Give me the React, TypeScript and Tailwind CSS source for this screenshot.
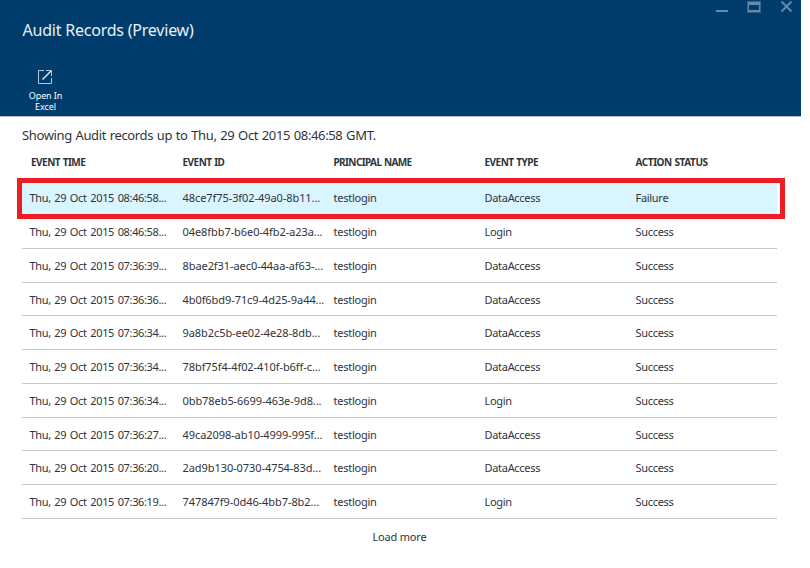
type RecordRow = {
  time: string;
  id: string;
  type: string;
  status: string;
  height: string;
};

const records: RecordRow[] = [
  { time: "08:46:58", id: "48ce7f75-3f02-49a0-8b11...", type: "DataAccess", status: "Failure", height: "h-[34px]" },
  { time: "08:46:58", id: "04e8fbb7-b6e0-4fb2-a23a...", type: "Login", status: "Success", height: "h-[34px]" },
  { time: "07:36:39", id: "8bae2f31-aec0-44aa-af63-...", type: "DataAccess", status: "Success", height: "h-[34px]" },
  { time: "07:36:36", id: "4b0f6bd9-71c9-4d25-9a44...", type: "DataAccess", status: "Success", height: "h-[33px]" },
  { time: "07:36:34", id: "9a8b2c5b-ee02-4e28-8db...", type: "DataAccess", status: "Success", height: "h-[34px]" },
  { time: "07:36:34", id: "78bf75f4-4f02-410f-b6ff-c...", type: "DataAccess", status: "Success", height: "h-[34px]" },
  { time: "07:36:34", id: "0bb78eb5-6699-463e-9d8...", type: "Login", status: "Success", height: "h-[34px]" },
  { time: "07:36:27", id: "49ca2098-ab10-4999-995f...", type: "DataAccess", status: "Success", height: "h-[33px]" },
  { time: "07:36:20", id: "2ad9b130-0730-4754-83d...", type: "DataAccess", status: "Success", height: "h-[34px]" },
  { time: "07:36:19", id: "747847f9-0d46-4bb7-8b2...", type: "Login", status: "Success", height: "h-[34px]" },
];

const columns = "grid grid-cols-[153px_151px_151px_151px_1fr] whitespace-nowrap";

function WindowControls() {
  return (
    <svg className="h-[14px] w-[78px]" viewBox="0 0 78 14" fill="none" shapeRendering="crispEdges">
      <rect x="0" y="10" width="12" height="2" fill="#6689a7" />
      <rect x="31" y="1" width="14" height="12" fill="#33638a" />
      <rect x="32" y="2" width="12" height="10" fill="#6689a7" />
      <rect x="33" y="5" width="10" height="5" fill="#003c6c" />
      <path d="M65.5 1.5 75.5 11.5M75.5 1.5 65.5 11.5" stroke="#6689a7" strokeWidth="1.9" shapeRendering="auto" />
    </svg>
  );
}

function OpenIcon() {
  return (
    <svg className="mr-px h-[14px] w-[14px]" viewBox="0 0 14 14" fill="none" stroke="#b5c6d5">
      <path d="M6 .5H.5V13.5H13.5V8" />
      <path d="M8 .5H13.5V6" />
      <path d="M4.5 9.5 13 1" strokeWidth="1.3" stroke="#f2f6f9" />
    </svg>
  );
}

export default function App() {
  return (
    <div className="h-[568px] w-[810px] overflow-hidden bg-white font-['Noto_Sans','Open_Sans',sans-serif] text-[#2f343b]">
      <header className="flex h-[117px] w-[801px] justify-between border-b border-[#b5bec7] bg-[#003c6c] text-white">
        <div className="pl-[22px] pt-[18px]">
          <h1 className="whitespace-nowrap pl-[0.5px] text-[16px] leading-6 font-normal tracking-[-0.22px] text-[#e9eff4]">
            Audit Records (Preview)
          </h1>
          <button className="mt-[28px] flex w-[47px] flex-col items-center whitespace-nowrap">
            <OpenIcon />
            <span className="mt-[6px] text-[9px] leading-[11px] tracking-[-0.1px]">
              Open In
              <br />
              Excel
            </span>
          </button>
        </div>
        <div className="mr-[7px]">
          <WindowControls />
        </div>
      </header>

      <main className="relative w-[777px] pl-[22px]">
        <p className="pt-[8px] text-[13px] leading-5 tracking-[-0.37px] [word-spacing:0.7px] whitespace-nowrap">
          Showing Audit records up to Thu, 29 Oct 2015 08:46:58 GMT.
        </p>
        <div className={`${columns} h-[36px] pt-[10px] pl-[7.5px] text-[10px] leading-[15px] font-bold tracking-[-0.5px] [word-spacing:0.5px]`}>
          <span className="pl-[1.5px]">EVENT TIME</span>
          <span>EVENT ID</span>
          <span className="tracking-[-0.6px]">PRINCIPAL NAME</span>
          <span>EVENT TYPE</span>
          <span className="tracking-[-0.42px]">ACTION STATUS</span>
        </div>
        {records.map((r, i) => (
          <div
            key={r.id}
            className={`${columns} ${r.height} border-b border-[#c8c8c8] pt-[9px] pl-[7.5px] text-[11px] leading-4 ${i === 0 ? "bg-[#d9f5ff]" : ""}`}
          >
            <span className="tracking-[-0.35px] [word-spacing:1.1px]">Thu, 29 Oct 2015 {r.time}...</span>
            <span className="tracking-[-0.07px]">{r.id}</span>
            <span className="tracking-[-0.25px]">testlogin</span>
            <span className="tracking-[-0.3px]">{r.type}</span>
            <span className="tracking-[-0.3px]">{r.status}</span>
          </div>
        ))}
        <div className="flex justify-center pt-[10px] text-[11px] leading-4 tracking-[-0.2px]">
          <button>Load more</button>
        </div>
        <div className="pointer-events-none absolute top-[61px] left-[17px] h-[41px] w-[768px] border-[5px] border-[#ee1c23]" />
      </main>
    </div>
  );
}
